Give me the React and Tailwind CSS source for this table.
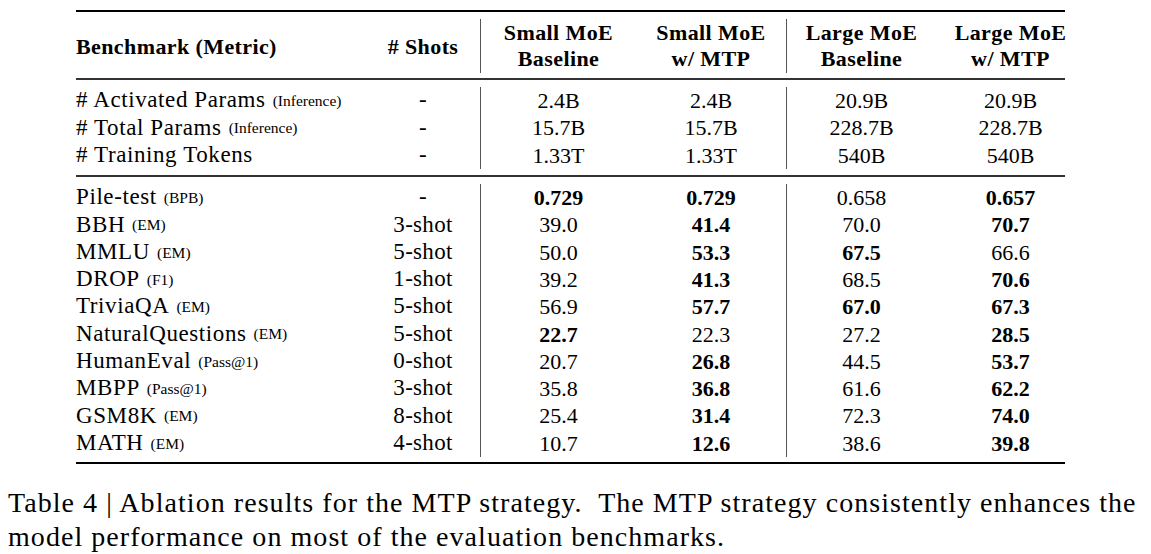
const groupA = [
  { name: '# Activated Params', metric: '(Inference)', shots: '-', v: ['2.4B', '2.4B', '20.9B', '20.9B'], b: [] },
  { name: '# Total Params', metric: '(Inference)', shots: '-', v: ['15.7B', '15.7B', '228.7B', '228.7B'], b: [] },
  { name: '# Training Tokens', metric: '', shots: '-', v: ['1.33T', '1.33T', '540B', '540B'], b: [] },
];

const groupB = [
  { name: 'Pile-test', metric: '(BPB)', shots: '-', v: ['0.729', '0.729', '0.658', '0.657'], b: [0, 1, 3] },
  { name: 'BBH', metric: '(EM)', shots: '3-shot', v: ['39.0', '41.4', '70.0', '70.7'], b: [1, 3] },
  { name: 'MMLU', metric: '(EM)', shots: '5-shot', v: ['50.0', '53.3', '67.5', '66.6'], b: [1, 2] },
  { name: 'DROP', metric: '(F1)', shots: '1-shot', v: ['39.2', '41.3', '68.5', '70.6'], b: [1, 3] },
  { name: 'TriviaQA', metric: '(EM)', shots: '5-shot', v: ['56.9', '57.7', '67.0', '67.3'], b: [1, 2, 3] },
  { name: 'NaturalQuestions', metric: '(EM)', shots: '5-shot', v: ['22.7', '22.3', '27.2', '28.5'], b: [0, 3] },
  { name: 'HumanEval', metric: '(Pass@1)', shots: '0-shot', v: ['20.7', '26.8', '44.5', '53.7'], b: [1, 3] },
  { name: 'MBPP', metric: '(Pass@1)', shots: '3-shot', v: ['35.8', '36.8', '61.6', '62.2'], b: [1, 3] },
  { name: 'GSM8K', metric: '(EM)', shots: '8-shot', v: ['25.4', '31.4', '72.3', '74.0'], b: [1, 3] },
  { name: 'MATH', metric: '(EM)', shots: '4-shot', v: ['10.7', '12.6', '38.6', '39.8'], b: [1, 3] },
];

const cols = 'grid grid-cols-[290px_114px_156px_150px_150px_129px]';

const Cell = ({ value, bold, i }) => {
  const border = i === 0 || i === 2 ? 'border-l border-[#555]' : '';
  const pad = i === 3 ? 'pl-[20px]' : '';
  return (
    <div className={`flex items-center justify-center ${border} ${pad} ${bold ? 'font-bold' : ''}`}>
      {value}
    </div>
  );
};

const Group = ({ rows }) => (
  <div className={`${cols} auto-rows-[27.3px] text-[22px]`}>
    {rows.map((r) => (
      <div key={r.name} className="contents">
        <div className="flex items-center whitespace-nowrap text-[23px] tracking-[0.6px]">
          {r.name}
          {r.metric && <span className="ml-[7px] text-[15.5px] tracking-normal">{r.metric}</span>}
        </div>
        <div className="flex items-center justify-center text-[23px] tracking-[0.3px]">{r.shots}</div>
        {r.v.map((val, i) => (
          <Cell key={i} i={i} value={val} bold={r.b.includes(i)} />
        ))}
      </div>
    ))}
  </div>
);

const Head = ({ top, bottom, i }) => {
  const border = i === 0 || i === 2 ? 'border-l border-[#555]' : '';
  const pad = i === 3 ? 'pl-[20px]' : '';
  return (
    <div className={`flex flex-col items-center justify-center whitespace-nowrap leading-[26px] ${border} ${pad}`}>
      <span>{top}</span>
      <span>{bottom}</span>
    </div>
  );
};

export default function App() {
  return (
    <div className="w-[1151px] h-[554px] bg-white text-black font-['Liberation_Serif',serif] overflow-hidden">
      <div className="ml-[76px] w-[989px] pt-[10px]">
        <div className="h-[2px] bg-black" />

        <div className="pt-[7px] pb-[5px]">
          <div className={`${cols} h-[54px] font-bold text-[22px] tracking-[0.4px]`}>
            <div className="flex items-center whitespace-nowrap">Benchmark (Metric)</div>
            <div className="flex items-center justify-center whitespace-nowrap">{'# Shots'}</div>
            <Head i={0} top="Small MoE" bottom="Baseline" />
            <Head i={1} top="Small MoE" bottom="w/ MTP" />
            <Head i={2} top="Large MoE" bottom="Baseline" />
            <Head i={3} top="Large MoE" bottom="w/ MTP" />
          </div>
        </div>

        <div className="h-[2px] bg-[#333]" />

        <div className="pt-[7px] pb-[6px]">
          <Group rows={groupA} />
        </div>

        <div className="h-[2px] bg-[#333]" />

        <div className="pt-[7px] pb-[5px]">
          <Group rows={groupB} />
        </div>

        <div className="h-[2px] bg-black" />
      </div>

      <p className="ml-[8px] mt-[22px] whitespace-nowrap text-[28px] leading-[34px] tracking-[1.05px]">
        Table 4 | Ablation results for the MTP strategy.&nbsp; The MTP strategy consistently enhances the
        <br />
        model performance on most of the evaluation benchmarks.
      </p>
    </div>
  );
}
